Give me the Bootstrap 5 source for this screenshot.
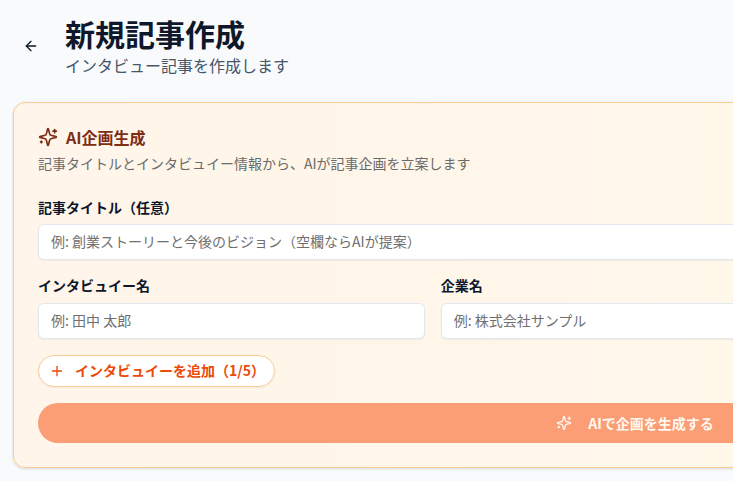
<!DOCTYPE html>
<html lang="ja"><head><meta charset="utf-8">
<link href="https://cdn.jsdelivr.net/npm/bootstrap@5.3.0/dist/css/bootstrap.min.css" rel="stylesheet">
<style>
html,body{overflow:hidden;height:100%}
body{background:#f8fafc;font-family:"Noto Sans CJK JP",sans-serif;color:#0f172a}
.pg{width:1268px;padding:15px 13px 0 13px}
.hdr{gap:26px;padding-left:10px;height:87px;padding-bottom:24px}
.back{color:#0f172a;display:block;line-height:0;margin-bottom:2px}
.ttl{font-size:30px;font-weight:700;line-height:36px;margin:0 0 2px;color:#0f172a}
.sub{font-size:16px;line-height:24px;color:#475569;margin:0}
.aic{background:linear-gradient(90deg,#fff5ea,#fff9e8);border:1px solid #fbcd96;border-radius:12px;padding:22px 24px 24px;box-shadow:0 1px 3px rgba(0,0,0,.14)}
.aih{color:#7c2d12;font-size:16px;font-weight:600;line-height:24px;gap:8px;margin-bottom:4px}
.aid{color:#6b6b6b;font-size:14px;line-height:20px;margin-bottom:24px}
.flb{font-size:14px;font-weight:600;line-height:20px;color:#0f172a;margin-bottom:7px;display:block}
.fin{height:36px;border:1px solid #e2e8f0;border-radius:6px;background:#fff;font-size:14px;padding:3px 12px 5px;box-shadow:0 1px 2px rgba(0,0,0,.06);width:100%;display:block}
.fin::placeholder{color:#6f6f6f;opacity:1}
.fgrid{display:grid;grid-template-columns:repeat(3,1fr);gap:16px;margin-top:15px;margin-bottom:16px}
.fgrid .flb{margin-bottom:8px}
.addb{height:32px;border:1px solid #fbcd96;border-radius:999px;background:#fff;color:#ea4a0a;font-size:14px;font-weight:600;padding:0 9px 0 10px;gap:10px;box-shadow:0 1px 2px rgba(0,0,0,.05)}
.addt{padding-bottom:2px}
.genb{height:40px;width:100%;border:0;border-radius:999px;background:#fb9d75;color:#fff8f1;font-size:14px;font-weight:600;margin-top:16px;gap:16px;padding:0 6px 0 8px}
</style></head>
<body>
<div class="pg">
<div class="d-flex align-items-start hdr">
<a class="back align-self-center" href="#"><svg width="16" height="16" viewBox="0 0 24 24" fill="none" stroke="currentColor" stroke-width="2" stroke-linecap="round" stroke-linejoin="round"><path d="m12 19-7-7 7-7"/><path d="M19 12H5"/></svg></a>
<div><h1 class="ttl">新規記事作成</h1><p class="sub">インタビュー記事を作成します</p></div>
</div>
<div class="aic">
<div class="d-flex align-items-center aih"><svg width="20" height="20" viewBox="0 0 24 24" fill="none" stroke="currentColor" stroke-width="2" stroke-linecap="round" stroke-linejoin="round"><path d="M9.94 15.5A2 2 0 0 0 8.5 14.06l-6.14-1.58a.5.5 0 0 1 0-.96L8.5 9.94A2 2 0 0 0 9.94 8.5l1.58-6.14a.5.5 0 0 1 .96 0L14.06 8.5a2 2 0 0 0 1.44 1.44l6.14 1.58a.5.5 0 0 1 0 .96L15.5 14.06a2 2 0 0 0-1.44 1.44l-1.58 6.14a.5.5 0 0 1-.96 0z"/><path d="M20 3v4"/><path d="M22 5h-4"/><path d="M4 17v2"/><path d="M5 18H3"/></svg><span>AI企画生成</span></div>
<p class="aid">記事タイトルとインタビュイー情報から、AIが記事企画を立案します</p>
<label class="flb">記事タイトル（任意）</label>
<input class="fin" placeholder="例: 創業ストーリーと今後のビジョン（空欄ならAIが提案）">
<div class="fgrid">
<div><label class="flb">インタビュイー名</label><input class="fin" placeholder="例: 田中 太郎"></div>
<div><label class="flb">企業名</label><input class="fin" placeholder="例: 株式会社サンプル"></div>
</div>
<button class="d-inline-flex align-items-center addb" type="button"><svg width="16" height="16" viewBox="0 0 24 24" fill="none" stroke="currentColor" stroke-width="2" stroke-linecap="round"><path d="M5 12h14"/><path d="M12 5v14"/></svg><span class="addt">インタビュイーを追加（1/5）</span></button>
<button class="d-flex align-items-center justify-content-center genb" type="button"><svg width="16" height="16" viewBox="0 0 24 24" fill="none" stroke="currentColor" stroke-width="2" stroke-linecap="round" stroke-linejoin="round"><path d="M9.94 15.5A2 2 0 0 0 8.5 14.06l-6.14-1.58a.5.5 0 0 1 0-.96L8.5 9.94A2 2 0 0 0 9.94 8.5l1.58-6.14a.5.5 0 0 1 .96 0L14.06 8.5a2 2 0 0 0 1.44 1.44l6.14 1.58a.5.5 0 0 1 0 .96L15.5 14.06a2 2 0 0 0-1.44 1.44l-1.58 6.14a.5.5 0 0 1-.96 0z"/><path d="M20 3v4"/><path d="M22 5h-4"/><path d="M4 17v2"/><path d="M5 18H3"/></svg><span>AIで企画を生成する</span></button>
</div>
</div>
<script src="https://cdn.jsdelivr.net/npm/bootstrap@5.3.0/dist/js/bootstrap.bundle.min.js"></script>
</body></html>
